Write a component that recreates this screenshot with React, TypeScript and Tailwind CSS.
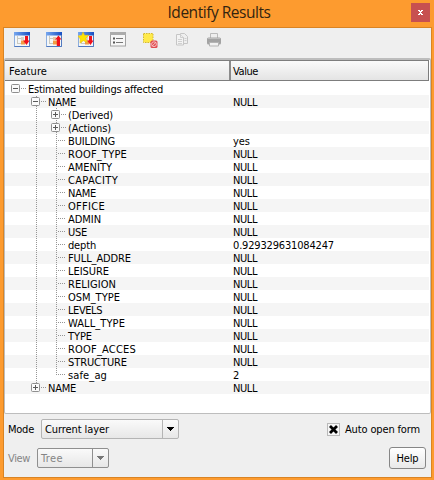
import React from "react";

type RowData = { label: string; value?: string; level: number; box?: "+" | "-"; last?: boolean; w: number };

const attrs: [string, string, number][] = [
  ["BUILDING", "yes", 47], ["ROOF_TYPE", "NULL", 59], ["AMENITY", "NULL", 44], ["CAPACITY", "NULL", 50],
  ["NAME", "NULL", 28], ["OFFICE", "NULL", 37], ["ADMIN", "NULL", 33], ["USE", "NULL", 19],
  ["depth", "0.929329631084247", 28], ["FULL_ADDRE", "NULL", 63], ["LEISURE", "NULL", 41], ["RELIGION", "NULL", 48],
  ["OSM_TYPE", "NULL", 52], ["LEVELS", "NULL", 34], ["WALL_TYPE", "NULL", 57], ["TYPE", "NULL", 24],
  ["ROOF_ACCES", "NULL", 68], ["STRUCTURE", "NULL", 59], ["safe_ag", "2", 39],
];

const valueWidth: Record<string, number> = { NULL: 24, yes: 17, "2": 6, "0.929329631084247": 101 };

const rows: RowData[] = [
  { label: "Estimated buildings affected", level: 0, box: "-", w: 135 },
  { label: "NAME", value: "NULL", level: 1, box: "-", w: 28 },
  { label: "(Derived)", level: 2, box: "+", w: 45 },
  { label: "(Actions)", level: 2, box: "+", w: 43 },
  ...attrs.map(([label, value, w], i) => ({ label, value, level: 2, w, last: i === attrs.length - 1 })),
  { label: "NAME", value: "NULL", level: 1, box: "+", w: 28, last: true },
];

/* Text whose tracking is adjusted so that it fills a given advance width. */
function Fit({ text, w, className = "" }: { text: string; w: number; className?: string }) {
  const ref = React.useRef<HTMLSpanElement>(null);
  const [ls, setLs] = React.useState(0);
  React.useLayoutEffect(() => {
    if (ref.current) setLs((w - ref.current.getBoundingClientRect().width) / text.length);
  }, []);
  return <span ref={ref} className={"whitespace-pre " + className} style={{ letterSpacing: ls }}>{text}</span>;
}

function Branch({ row, index }: { row: RowData; index: number }) {
  const dots: React.ReactNode[] = [];
  const vert = (x: number, a: number, b: number) => {
    for (let y = a; y < b; y++) if ((y + index * 13) % 2 === 0) dots.push(<rect key={x + "v" + y} x={x} y={y} width="1" height="1" />);
  };
  const cx = row.level * 20 + 11;
  if (row.level === 2) vert(31, 0, 13);
  if (row.level > 0) vert(cx, 0, row.last ? 7 : 13);
  for (let x = cx + (row.box ? 5 : 2); x < cx + 10; x += 2) dots.push(<rect key={"h" + x} x={x} y="6" width="1" height="1" />);
  const w = row.level * 20 + 23;
  return (
    <svg width={w} height="13" viewBox={`0 0 ${w} 13`} className="shrink-0">
      <g fill="#969696" shapeRendering="crispEdges">{dots}</g>
      {row.box && (
        <g>
          <rect x={cx - 4.5} y="2.5" width="8" height="8" rx="1" fill="#fafafa" stroke="#8f8f8f" />
          <path d={`M${cx - 3} 6.5h5`} stroke="#5a5a5a" />
          {row.box === "+" && <path d={`M${cx - 0.5} 4v5`} stroke="#5a5a5a" />}
        </g>
      )}
    </svg>
  );
}

function TreeIcon({ kind }: { kind: "down" | "up" | "star" }) {
  return (
    <svg width="17" height="16" viewBox="0 0 17 16">
      <defs>
        <linearGradient id="cap" x2="1"><stop stopColor="#77a7ee" /><stop offset="1" stopColor="#164fc4" /></linearGradient>
      </defs>
      <rect x=".5" y="1" width="15" height="13.5" fill="#f4f6f8" stroke="#8daede" />
      <rect x="0" y="0" width="16" height="3.5" fill="url(#cap)" />
      <path d="M15.500 3v11.5H.5" fill="none" stroke="#5179bf" />
      <path d="M3.5 4v8M4 6.5h3M4 11.5h3" stroke="#c9c9c0" fill="none" />
      <rect x="7" y="5" width="3" height="3" fill={kind === "up" ? "#e4c6a2" : "#d7d3c9"} />
      <rect x="7" y="8.500" width="4" height="4" fill="#f39b43" />
      {kind === "up"
        ? <path d="M12.500 3.5 15.500 7.500h-1.500V14h-3.200V7.500H9z" fill="#f0101b" />
        : <path d="M11 4h3v4.500h1.600L12.500 13 9 8.500h2z" fill="#f0101b" />}
      {kind === "star" && <path d="m5 0 1.700 3.500 4-.2-2.900 3.200 1.400 4-3.900-1.800L2 11.200l.3-4.200L-.2 4l3.800-.6z" fill="#ffe500" stroke="#e3bb1c" strokeWidth=".6" />}
    </svg>
  );
}

function Toolbar() {
  return (
    <div className="flex h-[30px] shrink-0 items-start gap-[15px] pl-[10px] pt-[4px]">
      <TreeIcon kind="down" />
      <TreeIcon kind="up" />
      <TreeIcon kind="star" />
      <svg width="17" height="16" viewBox="0 0 17 16">
        <rect x=".5" y=".5" width="15" height="13.500" fill="#f7f7f7" stroke="#a2a2a2" />
        <path d="M0 1.500h16" stroke="#ababab" strokeWidth="3" />
        <path d="M3 6.500h2M3 10.500h2" stroke="#555" strokeWidth="2" />
        <path d="M6 6.500h7M6 10.500h7" stroke="#777" />
      </svg>
      <svg width="17" height="17" viewBox="0 0 17 17">
        <rect x="1.500" y="1.500" width="9.500" height="9" fill="#ffea4a" stroke="#d3b92e" strokeDasharray="1.500 1" />
        <rect x="8.500" y="8.500" width="7" height="7.500" rx="1.500" fill="#e04a50" />
        <circle cx="12" cy="12.200" r="2.400" fill="none" stroke="#f8caca" strokeWidth=".9" />
        <path d="m10 14.300 4-4.200" stroke="#f8caca" strokeWidth=".9" />
      </svg>
      <svg width="17" height="16" viewBox="0 0 17 16" fill="#efefef" stroke="#c6c6c6">
        <path d="M6.500 1.500h4l3 3v7h-7z" />
        <path d="M2.500 2.500h4l3 3v7.500h-7z" fill="#f3f3f3" />
        <path d="M6.500 2.500v3h3M4 7.500h4M4 9.500h4M4 11.500h4M10.500 6.500h2M10.500 8.500h2" strokeWidth=".8" />
      </svg>
      <svg width="17" height="16" viewBox="0 0 17 16">
        <path d="M4.500 1.500h7V7h-7z" fill="#eee" stroke="#bbb" />
        <rect x="1" y="5.500" width="14" height="7" rx="1.500" fill="#a3a3a3" />
        <path d="M2 6.500h12" stroke="#bebebe" />
        <path d="M3.500 10.500h9v3.500h-9z" fill="#f2f2f2" stroke="#b5b5b5" />
      </svg>
    </div>
  );
}

function Combo({ label, w, textW, disabled }: { label: string; w: string; textW: number; disabled?: boolean }) {
  return (
    <div className={`flex h-[20px] rounded-[2px] border bg-gradient-to-b from-[#fafafa] to-[#e7e7e7] ${w} ${disabled ? "border-[#8f8f8f] text-[#858585]" : "border-[#b4b4b4]"}`}>
      <div className="flex flex-1 items-center pl-[3px]"><Fit text={label} w={textW} /></div>
      <div className={`flex w-[16px] items-center justify-center border-l ${disabled ? "border-[#8f8f8f]" : "border-[#b4b4b4]"}`}>
        <svg width="7" height="4" viewBox="0 0 7 4" shapeRendering="crispEdges"><path d="M0 0h7v1H6v1H5v1H4v1H3V3H2V2H1V1H0z" fill={disabled ? "#777" : "#000"} /></svg>
      </div>
    </div>
  );
}

export default function App() {
  return (
    <div className="flex h-[480px] w-[434px] flex-col bg-[#fd9b2f] pb-[2px] pl-[3px] pr-[2px] font-['DejaVu_Sans_Condensed','DejaVu_Sans',sans-serif] text-[11px] leading-[13px] text-black [font-stretch:condensed]">
      <header className="flex h-[27px] shrink-0">
        <h1 className="flex flex-1 justify-center pl-[24px] pt-[2px] font-['Open_Sans','Noto_Sans',sans-serif] text-[15.5px] leading-[21px] text-[#33240f] [font-stretch:normal]"><Fit text="Identify Results" w={103} /></h1>
        <button className="mr-[2px] mt-[3px] flex h-[19px] w-[19px] items-center justify-center bg-[#c75050]">
          <svg width="5" height="5" viewBox="0 0 5 5" shapeRendering="crispEdges"><path d="M0 0h2v1H0zM3 0h2v1H3zM1 1h3v1H1zM2 2h1v1H2zM1 3h3v1H1zM0 4h2v1H0zM3 4h2v1H3z" fill="#fff" /></svg>
        </button>
      </header>
      <main className="flex min-h-0 w-[429px] flex-1 flex-col border border-[#d98424] bg-[#efefef]">
        <Toolbar />
        <section className="flex h-[356px] shrink-0 flex-col rounded-[2px] border border-t-2 border-[#bdbdbd] bg-white pr-px">
          <div className="mb-px flex h-[21px] shrink-0 border-y border-r border-[#7d7d7d] bg-gradient-to-b from-[#fafafa] to-[#e4e4e4]">
            <div className="flex w-[226px] items-center border-r-2 border-[#8b8b8b] pl-[4px] pt-px"><Fit text="Feature" w={38} /></div>
            <div className="flex items-center pl-[2px] pt-px"><Fit text="Value" w={25} /></div>
          </div>
          {rows.map((r, i) => (
            <div key={i} className={`flex h-[13px] shrink-0 ${i % 2 ? "bg-[#f5f5f5]" : "bg-white"}`}>
              <div className="flex w-[228px] shrink-0"><Branch row={r} index={i} /><Fit text={r.label} w={r.w} className="relative pt-px" /></div>
              {r.value && <Fit text={r.value} w={valueWidth[r.value]} className="relative pt-px" />}
            </div>
          ))}
        </section>
        <div className="mt-[5px] flex h-[20px] shrink-0 items-center pl-[4px] pr-[11px]">
          <div className="w-[33px]"><Fit text="Mode" w={26} /></div>
          <Combo label="Current layer" w="w-[138px]" textW={64} />
          <div className="ml-auto flex items-center gap-[5px]">
            <div className="flex h-[13px] w-[13px] items-center justify-center border border-[#b9b9b9] bg-[#f5f5f5]">
              <svg width="9" height="9" viewBox="0 0 9 9"><path d="m1 1 7 7M8 1 1 8" stroke="#000" strokeWidth="2.800" /></svg>
            </div>
            <Fit text="Auto open form" w={75} />
          </div>
        </div>
        <div className="mt-[8px] flex h-[22px] shrink-0 items-center pl-[4px] pr-[5px]">
          <div className="w-[29px] text-[#858585]"><Fit text="View" w={22} /></div>
          <Combo label="Tree" w="w-[72px]" textW={22} disabled />
          <button className="ml-auto flex h-[22px] w-[37px] items-center justify-center rounded-[3px] border border-[#868686] bg-gradient-to-b from-white to-[#e9e9e9]"><Fit text="Help" w={22} /></button>
        </div>
      </main>
    </div>
  );
}
